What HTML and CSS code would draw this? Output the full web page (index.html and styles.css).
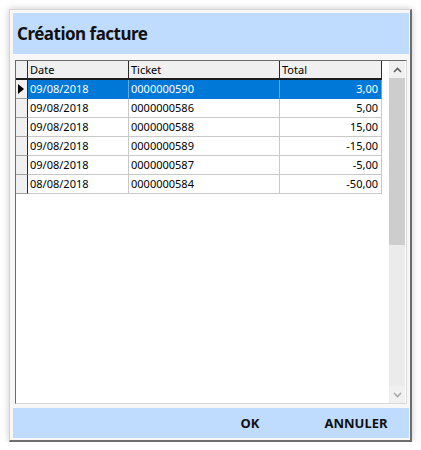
FILE: index.html
```html
<!DOCTYPE html>
<html lang="fr">
<head>
  <meta charset="UTF-8" />
  <title>Création facture</title>
  <link rel="stylesheet" href="styles.css">
</head>
<body>
  <div class="window">
    <div class="title-bar">Création facture</div>

    <div class="grid">
      <div class="grid-body">
        <div class="row head">
          <div class="sel"></div>
          <div class="cell">Date</div>
          <div class="cell">Ticket</div>
          <div class="cell">Total</div>
        </div>
        <div class="row selected">
          <div class="sel"><span class="pointer"></span></div>
          <div class="cell">09/08/2018</div>
          <div class="cell">0000000590</div>
          <div class="cell num">3,00</div>
        </div>
        <div class="row">
          <div class="sel"></div>
          <div class="cell">09/08/2018</div>
          <div class="cell">0000000586</div>
          <div class="cell num">5,00</div>
        </div>
        <div class="row">
          <div class="sel"></div>
          <div class="cell">09/08/2018</div>
          <div class="cell">0000000588</div>
          <div class="cell num">15,00</div>
        </div>
        <div class="row">
          <div class="sel"></div>
          <div class="cell">09/08/2018</div>
          <div class="cell">0000000589</div>
          <div class="cell num">-15,00</div>
        </div>
        <div class="row">
          <div class="sel"></div>
          <div class="cell">09/08/2018</div>
          <div class="cell">0000000587</div>
          <div class="cell num">-5,00</div>
        </div>
        <div class="row">
          <div class="sel"></div>
          <div class="cell">08/08/2018</div>
          <div class="cell">0000000584</div>
          <div class="cell num">-50,00</div>
        </div>
      </div>

      <div class="scrollbar">
        <div class="arrow up">
          <svg width="9" height="6" viewBox="0 0 9 6"><path d="M1 5 L4.5 1.5 L8 5" fill="none" stroke="#606060" stroke-width="1.6"/></svg>
        </div>
        <div class="thumb"></div>
        <div class="track"></div>
        <div class="arrow down">
          <svg width="9" height="6" viewBox="0 0 9 6"><path d="M1 1 L4.5 4.5 L8 1" fill="none" stroke="#a8a8a8" stroke-width="1.6"/></svg>
        </div>
      </div>
    </div>

    <div class="button-bar">
      <button class="btn">OK</button>
      <button class="btn">ANNULER</button>
    </div>
  </div>
</body>
</html>
```

FILE: styles.css
```css
* {
  box-sizing: border-box;
}

body {
  margin: 0;
  background: #ffffff;
  font-family: "Noto Sans", "Open Sans", sans-serif;
  color: #000;
}

.window {
  margin: 9px 0 0 9px;
  width: 403px;
  height: 433px;
  padding: 3px 1px 1px 3px;
  background: #f7f7f7;
  border-left: 1px solid #d4d4d4;
  border-top: 1px solid #d4d4d4;
  border-right: 2px solid #6e6e6e;
  border-bottom: 2px solid #6e6e6e;
  box-shadow: 0 0 7px rgba(0, 0, 0, 0.22);
  display: flex;
  flex-direction: column;
}

.title-bar {
  height: 41px;
  background: #bfdbfe;
  font-size: 17px;
  font-weight: 700;
  letter-spacing: -0.5px;
  padding: 9px 0 0 4px;
  color: #111;
}

.grid {
  margin: 6px 2px 0 2px;
  height: 344px;
  background: #fff;
  border-top: 1px solid #6a6a6a;
  border-left: 1px solid #6a6a6a;
  border-right: 1px solid #d8d8d8;
  border-bottom: 1px solid #d8d8d8;
  display: flex;
}

.grid-body {
  width: 366px;
}

.row {
  display: grid;
  grid-template-columns: 12px 101px 151px 102px;
  height: 19px;
  font-size: 11px;
}

.sel {
  background: #f0f0f0;
  border-right: 1px solid #2b2b2b;
  border-bottom: 1px solid #a0a0a0;
  display: flex;
  align-items: center;
  padding-left: 2px;
}

.pointer {
  width: 0;
  height: 0;
  border-top: 5px solid transparent;
  border-bottom: 5px solid transparent;
  border-left: 6px solid #000;
}

.cell {
  border-right: 1px solid #c8c8c8;
  border-bottom: 1px solid #c8c8c8;
  padding: 1px 0 0 2px;
  line-height: 16px;
  white-space: nowrap;
}

.num {
  text-align: right;
  padding-right: 3px;
}

.head .sel,
.head .cell {
  background: #f0f0f0;
  border-bottom: 2px solid #1e1e1e;
  border-right: 1px solid #2b2b2b;
}

.selected .cell {
  background: #0078d7;
  color: #fff;
  border-right-color: #6aa8e0;
  border-bottom-color: #0078d7;
}

.scrollbar {
  width: 16px;
  margin-left: 7px;
  display: flex;
  flex-direction: column;
  background: #eaeaea;
}

.arrow {
  height: 17px;
  display: flex;
  align-items: center;
  justify-content: center;
  background: #f0f0f0;
}

.thumb {
  height: 167px;
  background: #cdcdcd;
}

.track {
  flex: 1;
  background: #ebebeb;
}

.button-bar {
  margin-top: 4px;
  height: 30px;
  background: #bfdbfe;
  display: flex;
  justify-content: flex-end;
}

.btn {
  width: 106px;
  background: none;
  border: none;
  font-family: "Noto Sans", "Open Sans", sans-serif;
  font-size: 13px;
  font-weight: 700;
  color: #111;
  padding: 0;
}
```
